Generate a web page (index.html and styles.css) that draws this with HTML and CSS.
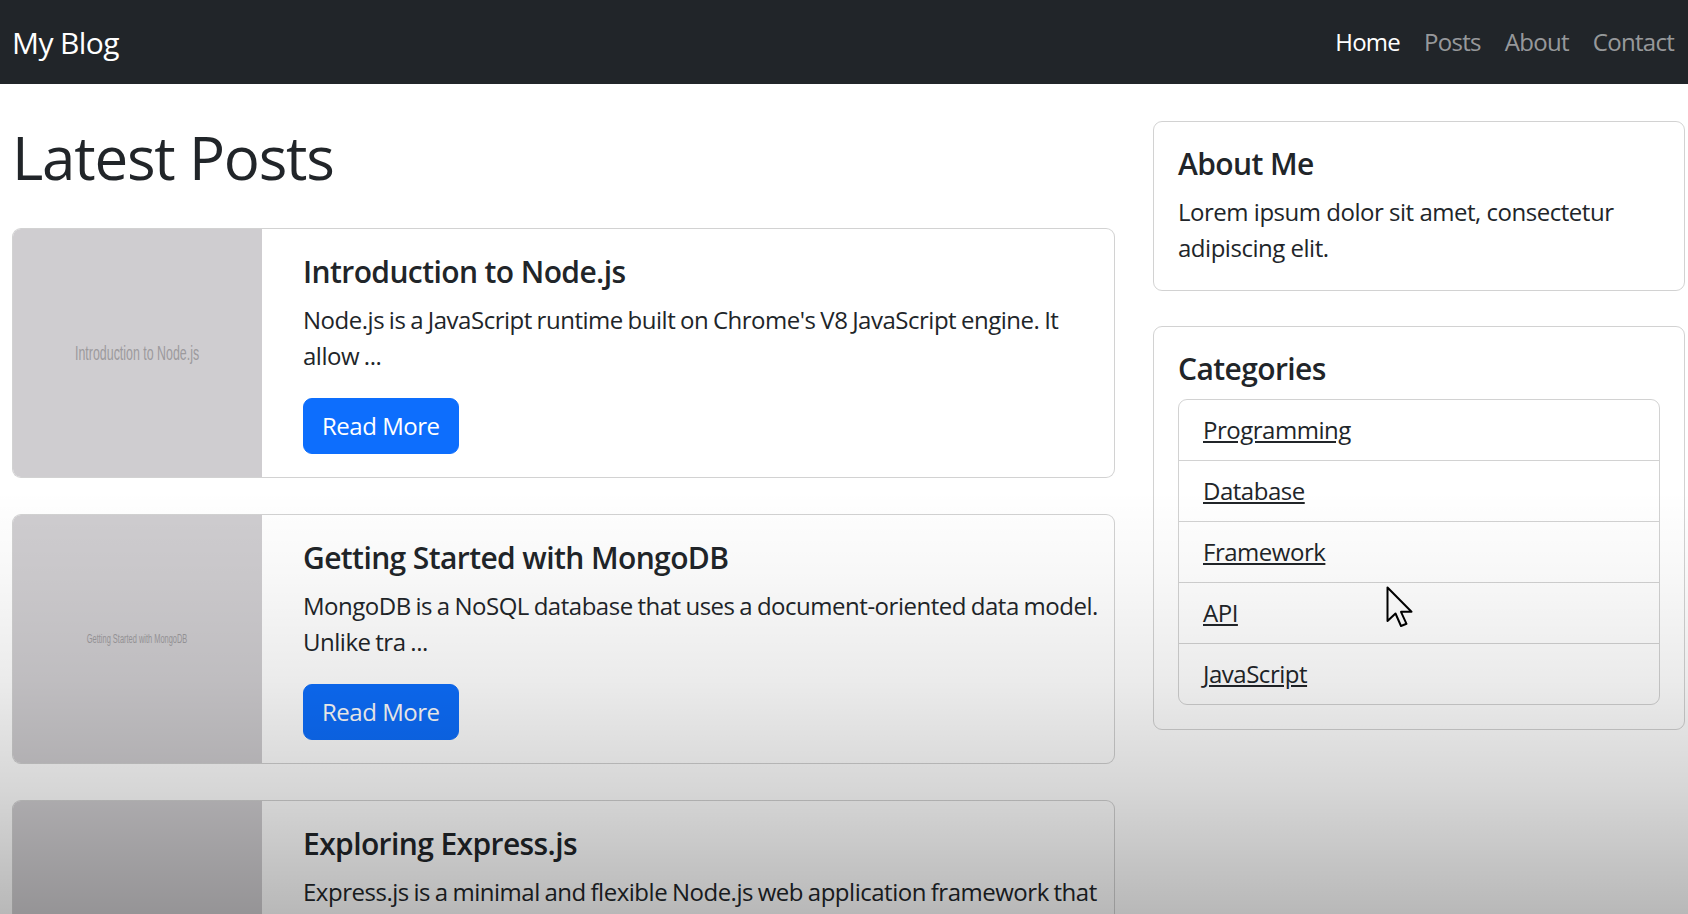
FILE: index.html
```html
<!DOCTYPE html>
<html lang="en">
<head>
<meta charset="utf-8">
<title>My Blog</title>
<link rel="stylesheet" href="styles.css">
</head>
<body>
<nav class="navbar">
  <a class="brand" href="#">My Blog</a>
  <ul class="nav">
    <li><a class="nav-link active" href="#">Home</a></li>
    <li><a class="nav-link" href="#">Posts</a></li>
    <li><a class="nav-link" href="#">About</a></li>
    <li><a class="nav-link" href="#">Contact</a></li>
  </ul>
</nav>

<div class="page">
  <main class="main">
    <h1 class="page-title">Latest Posts</h1>

    <article class="post">
      <div class="thumb"><span class="ph ph-lg">Introduction to Node.js</span></div>
      <div class="post-body">
        <h5 class="post-title">Introduction to Node.js</h5>
        <p class="post-text">Node.js is a JavaScript runtime built on Chrome's V8 JavaScript engine. It allow ...</p>
        <a class="btn" href="#">Read More</a>
      </div>
    </article>

    <article class="post">
      <div class="thumb"><span class="ph ph-sm">Getting Started with MongoDB</span></div>
      <div class="post-body">
        <h5 class="post-title">Getting Started with MongoDB</h5>
        <p class="post-text">MongoDB is a NoSQL database that uses a document-oriented data model. Unlike tra ...</p>
        <a class="btn" href="#">Read More</a>
      </div>
    </article>

    <article class="post">
      <div class="thumb"><span class="ph ph-sm">Exploring Express.js</span></div>
      <div class="post-body">
        <h5 class="post-title">Exploring Express.js</h5>
        <p class="post-text">Express.js is a minimal and flexible Node.js web application framework that provides ...</p>
        <a class="btn" href="#">Read More</a>
      </div>
    </article>
  </main>

  <aside class="sidebar">
    <section class="card">
      <h5 class="card-title">About Me</h5>
      <p class="card-text">Lorem ipsum dolor sit amet, consectetur adipiscing elit.</p>
    </section>
    <section class="card">
      <h5 class="card-title">Categories</h5>
      <ul class="list-group">
        <li class="list-item"><a href="#">Programming</a></li>
        <li class="list-item"><a href="#">Database</a></li>
        <li class="list-item"><a href="#">Framework</a></li>
        <li class="list-item"><a href="#">API</a></li>
        <li class="list-item"><a href="#">JavaScript</a></li>
      </ul>
    </section>
  </aside>
</div>

<svg class="cursor" width="28" height="42" viewBox="0 0 28 42" aria-hidden="true">
  <path d="M1.5 1.5 L1.5 35 L9.5 27.5 L15 40 L20.5 37.8 L15 25.8 L25.5 25.8 Z" fill="#ffffff" stroke="#000000" stroke-width="2" stroke-linejoin="round"/>
</svg>
<div class="fade"></div>
</body>
</html>
```

FILE: styles.css
```css
* { box-sizing: border-box; }

html, body {
  margin: 0;
  padding: 0;
  height: 914px;
  overflow: hidden;
}

body {
  position: relative;
  background: #ffffff;
  color: #212529;
  font-family: "Open Sans", "Noto Sans", "Liberation Sans", sans-serif;
  font-size: 24px;
  line-height: 36px;
  letter-spacing: -0.02em;
}

a { color: inherit; }

/* ---------- navbar ---------- */
.navbar {
  height: 84px;
  background: #212529;
  display: flex;
  align-items: center;
  justify-content: space-between;
  padding: 0 2px 0 12px;
  letter-spacing: -0.03em;
}

.brand {
  color: #ffffff;
  text-decoration: none;
  font-size: 30px;
  line-height: 45px;
  letter-spacing: -0.02em;
}

.nav {
  display: flex;
  list-style: none;
  margin: 0;
  padding: 0;
}

.nav-link {
  display: block;
  padding: 12px;
  color: rgba(255, 255, 255, 0.55);
  text-decoration: none;
}

.nav-link.active { color: #ffffff; }

/* ---------- layout ---------- */
.page {
  display: grid;
  grid-template-columns: 1103px 532px;
  column-gap: 38px;
  padding: 37px 0 0 12px;
}

.page-title {
  margin: 0 0 35px;
  font-size: 60px;
  line-height: 72px;
  font-weight: 500;
  letter-spacing: -0.02em;
}

/* ---------- post cards ---------- */
.post {
  display: flex;
  border: 1px solid rgba(0, 0, 0, 0.175);
  border-radius: 9px;
  overflow: hidden;
  margin-bottom: 36px;
  background: #ffffff;
}

.thumb {
  flex: 0 0 249px;
  background: #cfcdd0;
  display: flex;
  align-items: center;
  justify-content: center;
  overflow: hidden;
}

.ph {
  font-family: "Liberation Sans", Arial, sans-serif;
  color: #9c9a9d;
  white-space: nowrap;
  letter-spacing: 0;
  word-spacing: 0;
  transform: scaleX(0.62);
}

.ph-lg { font-size: 20px; }
.ph-sm { font-size: 12px; }

.post-body {
  flex: 1;
  padding: 25px 2px 23px 41px;
}

.post-title,
.card-title {
  margin: 0 0 12px;
  font-size: 30px;
  line-height: 36px;
  font-weight: 600;
  letter-spacing: -0.02em;
}

.post-text {
  margin: 0 0 24px;
  word-spacing: -1px;
}

.btn {
  display: inline-block;
  padding: 9px 18px;
  border: 1px solid #0d6efd;
  border-radius: 9px;
  background: #0d6efd;
  color: #ffffff;
  text-decoration: none;
}

/* ---------- sidebar ---------- */
.card {
  border: 1px solid rgba(0, 0, 0, 0.175);
  border-radius: 9px;
  padding: 24px;
  margin-bottom: 35px;
}

.card-text { margin: 0; }

.list-group {
  list-style: none;
  margin: 0;
  padding: 0;
  border: 1px solid rgba(0, 0, 0, 0.175);
  border-radius: 9px;
}

.list-item {
  padding: 12px 24px;
  border-bottom: 1px solid rgba(0, 0, 0, 0.175);
}

.list-item:last-child { border-bottom: 0; }

.list-item a {
  color: #212529;
  text-decoration: underline;
}

/* ---------- overlays ---------- */
.cursor {
  position: absolute;
  left: 1386px;
  top: 586px;
}

.fade {
  position: absolute;
  left: 0;
  top: 0;
  width: 100%;
  height: 914px;
  pointer-events: none;
  background: linear-gradient(to bottom,
    rgba(0, 0, 0, 0) 0,
    rgba(0, 0, 0, 0) 490px,
    rgba(0, 0, 0, 0.03) 580px,
    rgba(0, 0, 0, 0.08) 680px,
    rgba(0, 0, 0, 0.16) 790px,
    rgba(0, 0, 0, 0.28) 914px);
}
```
